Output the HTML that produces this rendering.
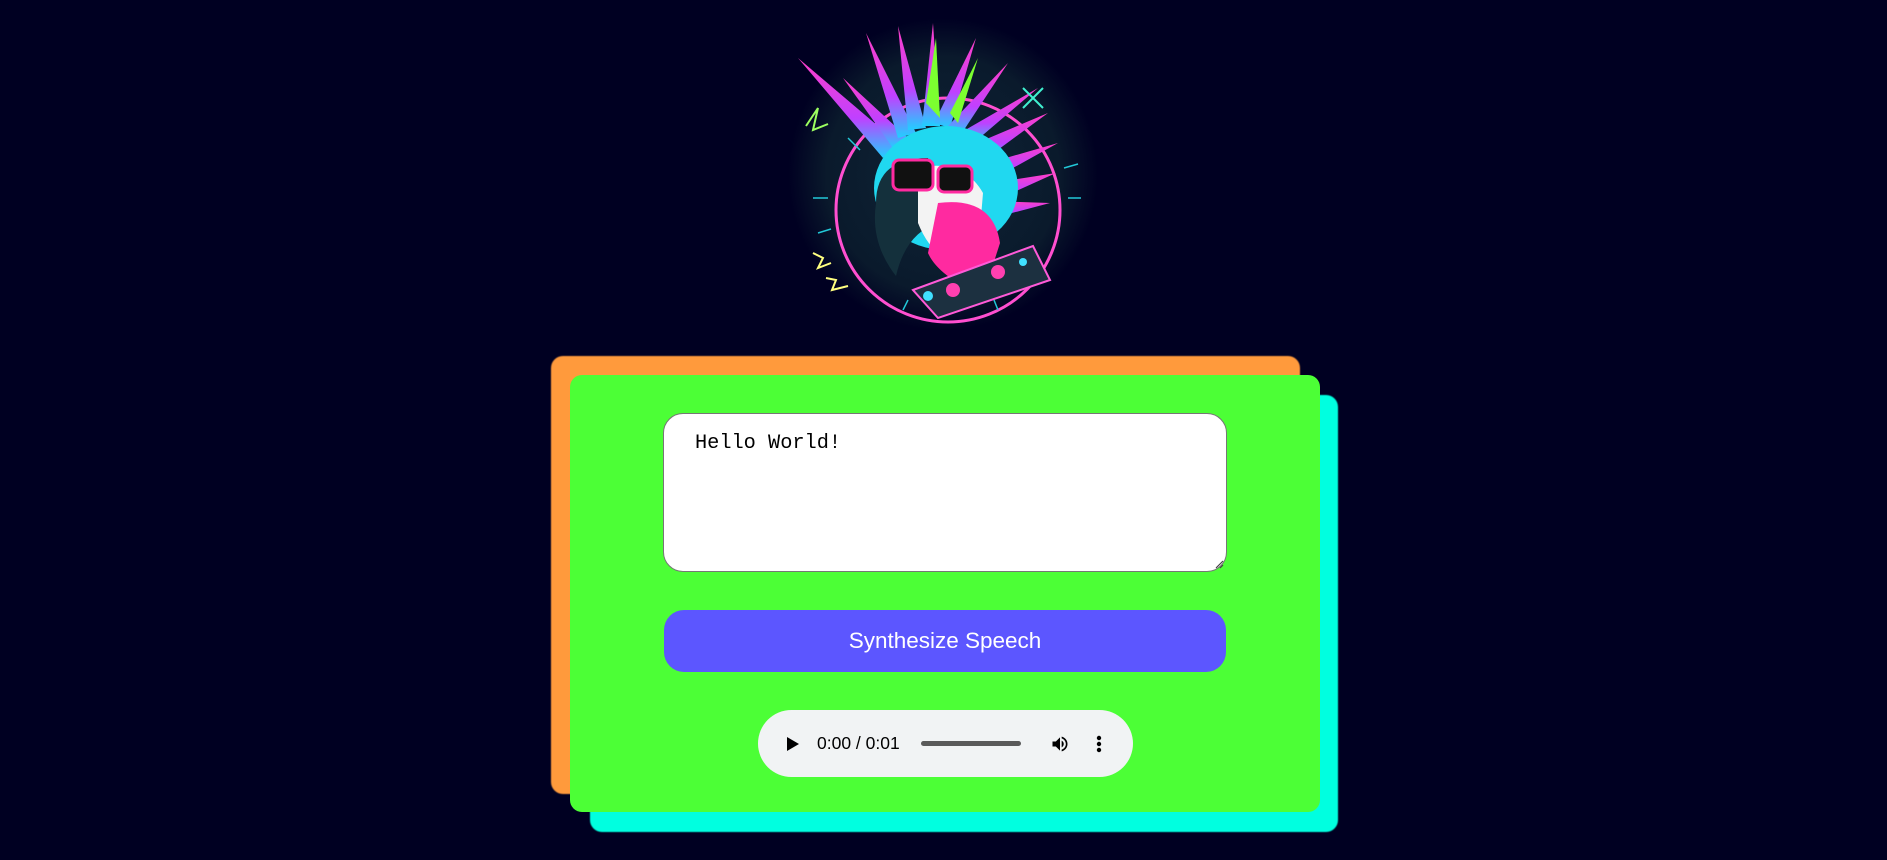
<!DOCTYPE html>
<html><head><meta charset="utf-8"><style>
html,body{margin:0;padding:0;width:1887px;height:860px;background:#000022;overflow:hidden;font-family:"Liberation Sans",Arial,sans-serif}
.abs{position:absolute}
.orange{left:551px;top:356px;width:749px;height:438px;background:#ff9a3c;border-radius:12px;filter:blur(0.6px)}
.cyan{left:590px;top:395px;width:748px;height:437px;background:#00ffe0;border-radius:12px;filter:blur(0.6px)}
.green{left:570px;top:375px;width:750px;height:437px;background:#4cff36;border-radius:12px}
.ta{left:663px;top:413px;width:564px;height:159px;background:#fff;border:1px solid #767676;border-radius:20px;box-sizing:border-box}
.ta span{position:absolute;left:31px;top:18px;font-family:"Liberation Mono","DejaVu Sans Mono",monospace;font-size:20.3px;color:#000}
.btn{left:664px;top:610px;width:562px;height:62px;background:#5c56ff;border-radius:20px;color:#fff;font-size:22.5px;text-align:center;line-height:62px}
.aud{left:758px;top:710px;width:375px;height:67px;background:#f1f3f4;border-radius:34px}
</style></head><body>
<svg class="abs" style="left:788px;top:18px" width="310" height="313" viewBox="0 0 310 313">
<defs>
<radialGradient id="bg" cx="50%" cy="50%" r="50%"><stop offset="0" stop-color="#0f2436"/><stop offset="0.75" stop-color="#0a1a2c"/><stop offset="1" stop-color="#000022"/></radialGradient>
<linearGradient id="sp" x1="0" y1="0" x2="0" y2="1"><stop offset="0" stop-color="#ff3fc8"/><stop offset="0.6" stop-color="#c040ff"/><stop offset="1" stop-color="#20d0ff"/></linearGradient>
</defs>
<rect width="310" height="313" fill="url(#bg)"/>
<circle cx="160" cy="192" r="112" fill="none" stroke="#ff4fd0" stroke-width="3"/>
<g stroke="#22c8d8" stroke-width="1.5">
<line x1="25" y1="180" x2="40" y2="180"/><line x1="30" y1="215" x2="43" y2="211"/><line x1="280" y1="180" x2="293" y2="180"/><line x1="276" y1="150" x2="290" y2="146"/><line x1="60" y1="120" x2="72" y2="132"/><line x1="115" y1="292" x2="120" y2="282"/><line x1="210" y1="292" x2="206" y2="282"/>
</g>
<g fill="url(#sp)">
<polygon points="10,40 110,125 95,140"/><polygon points="55,60 120,120 105,130"/>
<polygon points="78,15 128,115 110,120"/><polygon points="110,8 138,110 120,112"/>
<polygon points="145,5 152,108 134,108"/><polygon points="188,20 162,110 146,105"/>
<polygon points="220,45 172,118 160,108"/><polygon points="250,70 182,128 172,115"/>
<polygon points="260,95 192,145 182,128"/><polygon points="270,125 198,165 190,148"/>
<polygon points="268,155 202,185 198,166"/><polygon points="262,185 205,200 202,183"/>
</g>
<polygon points="138,85 148,20 152,100" fill="#7cff30"/><polygon points="162,95 190,40 170,105" fill="#7cff30"/>
<ellipse cx="158" cy="170" rx="72" ry="62" fill="#20d8f0"/>
<path d="M88,185 Q88,140 140,140 L150,205 Q118,215 108,258 Q82,225 88,185Z" fill="#14303c"/>
<path d="M130,150 Q175,140 195,175 L190,235 Q150,255 130,205Z" fill="#f3f3f3"/>
<path d="M150,185 Q205,178 212,225 L195,278 Q150,258 140,235Z" fill="#ff2aa0"/>
<rect x="105" y="142" width="40" height="30" rx="6" fill="#111" stroke="#ff2aa0" stroke-width="3"/>
<rect x="150" y="148" width="34" height="26" rx="6" fill="#111" stroke="#ff2aa0" stroke-width="3"/>
<polygon points="125,272 245,228 262,262 150,300" fill="#1c3040" stroke="#ff5ad8" stroke-width="2"/>
<circle cx="165" cy="272" r="7" fill="#ff40b0"/><circle cx="210" cy="254" r="7" fill="#ff40b0"/><circle cx="140" cy="278" r="5" fill="#40e0ff"/><circle cx="235" cy="244" r="4" fill="#40e0ff"/>
<path d="M18,108 L30,90 L25,112 L40,106" stroke="#9cff60" stroke-width="2" fill="none"/>
<path d="M235,70 L255,90 M255,70 L235,90" stroke="#40f0d0" stroke-width="2"/>
<path d="M25,235 L35,240 L30,250 L43,245" stroke="#ffff80" stroke-width="2" fill="none"/>
<path d="M38,260 L48,262 L44,272 L60,268" stroke="#ffff80" stroke-width="2" fill="none"/>
</svg>
<div class="abs orange"></div>
<div class="abs cyan"></div>
<div class="abs green"></div>
<div class="abs ta"><span>Hello World!</span>
<svg class="abs" style="right:2px;bottom:2px" width="10" height="10"><path d="M9,2 L2,9 M9,6 L6,9" stroke="#444" stroke-width="1.2"/></svg></div>
<div class="abs btn">Synthesize Speech</div>
<div class="abs aud">
<svg class="abs" style="left:28px;top:26px" width="14" height="16"><polygon points="1,1 13,8 1,15" fill="#000"/></svg>
<div class="abs" style="left:59px;top:22px;font-size:17.5px;color:#000;line-height:22px">0:00 / 0:01</div>
<div class="abs" style="left:163px;top:31px;width:100px;height:5px;background:#5a5a5a;border-radius:3px"></div>
<svg class="abs" style="left:292px;top:24px" width="20" height="20" viewBox="0 0 24 24"><path d="M3 9v6h4l5 5V4L7 9H3zm13.5 3c0-1.770-1.02-3.29-2.5-4.03v8.05c1.48-.73 2.5-2.25 2.5-4.02z" fill="#000"/><path d="M14 3.2v2.1c2.9.9 5 3.5 5 6.7s-2.1 5.8-5 6.7v2.1c4-.9 7-4.5 7-8.8s-3-7.9-7-8.8z" fill="#000"/></svg>
<svg class="abs" style="left:337px;top:24px" width="8" height="20"><circle cx="4" cy="4" r="2.2"/><circle cx="4" cy="10" r="2.2"/><circle cx="4" cy="16" r="2.2"/></svg>
</div>
</body></html>
